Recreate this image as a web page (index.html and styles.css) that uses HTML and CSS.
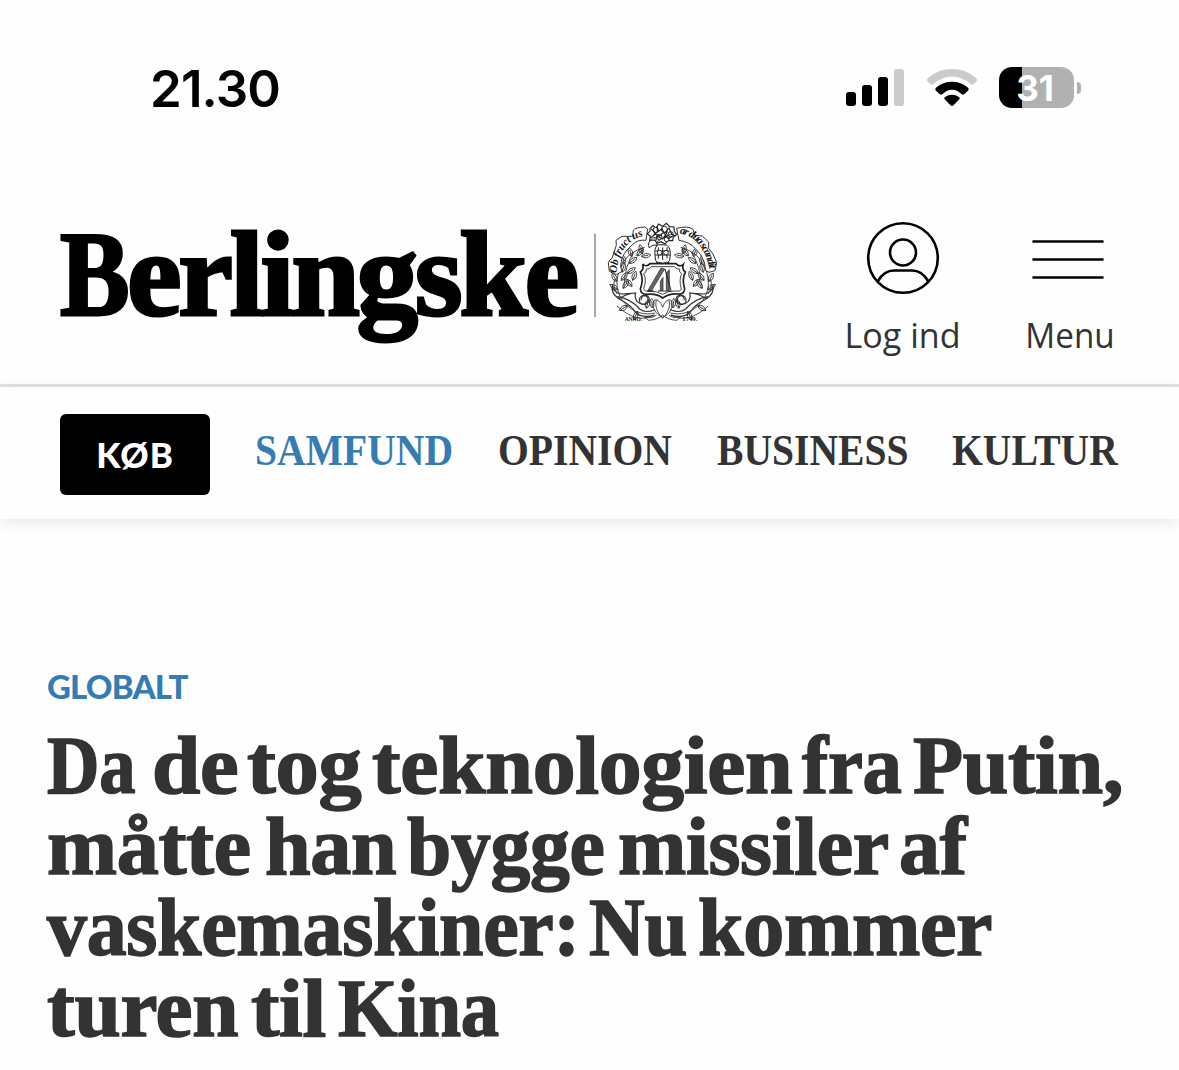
FILE: index.html
```html
<!DOCTYPE html>
<html lang="da">
<head>
<meta charset="utf-8">
<title>Berlingske</title>
<link rel="stylesheet" href="styles.css">
</head>
<body>
<div class="status">
  <span class="clock">21.30</span>
  <div class="indicators">
    <svg class="signal" viewBox="0 0 58 38"><rect y="23" width="10" height="14" rx="3"/><rect x="16" y="16" width="10" height="21" rx="3"/><rect x="32" y="8" width="10" height="29" rx="3"/><rect class="dim" x="48" width="10" height="37" rx="3"/></svg>
    <svg class="wifi" viewBox="0 0 50 38"><path class="dim" d="M.4 12.200Q-.8 10.800.8 9.200Q11 0 25 0T49.200 9.200Q50.800 10.800 49.600 12.200L46.500 15.200Q45 16.500 43.500 15Q35 7.500 25 7.500T6.500 15Q5 16.500 3.500 15.200Z"/><path d="M8.800 21.500Q7.500 20 9 18.700Q16 12.800 25 12.800T41 18.700Q42.500 20 41.200 21.500L37.500 25Q36 26 34.500 25Q30 20.700 25 20.700T15.500 25Q14 26 12.500 25Z"/><path d="M17.700 30.300Q16.500 29 18 28Q25 23.300 32 28Q33.500 29 32.300 30.300L26.500 36.200Q25 37.700 23.500 36.200Z"/></svg>
    <div class="battery"><span class="cell">31</span><span class="cap"></span></div>
  </div>
</div>
<header class="masthead">
  <div class="brand">
    <span class="wordmark"><span class="initial">B</span><span class="rest">erlingske</span></span>
    <svg class="crest" viewBox="0 0 420 360">
      <defs>
        <path id="ribbonL" d="M80 190Q86 90 172 75"/>
        <path id="ribbonR" d="M268 70Q342 82 360 187"/>
        <path id="leaf" d="M0 0Q-13-13 0-29Q13-13 0 0ZM0 0V-21"/>
        <g id="half">
          <path d="M195 309C135 324 72 272 82 205C88 157 118 124 164 112M74 208Q67 231 82 252M192 314Q145 345 81 288M132 126Q104 167 102 228"/>
          <use href="#leaf" transform="translate(80 215) rotate(-28)"/><use href="#leaf" transform="translate(94 211) rotate(38)"/>
          <use href="#leaf" transform="translate(84 239) rotate(-58)"/><use href="#leaf" transform="translate(99 235) rotate(35)"/>
          <use href="#leaf" transform="translate(96 187) rotate(15)"/><use href="#leaf" transform="translate(112 190) rotate(55)"/>
          <use href="#leaf" transform="translate(103 163) rotate(-10)"/><use href="#leaf" transform="translate(118 160) rotate(52)"/>
          <use href="#leaf" transform="translate(126 140) rotate(-20)"/><use href="#leaf" transform="translate(141 138) rotate(38)"/>
          <use href="#leaf" transform="translate(157 132) rotate(-15)"/><use href="#leaf" transform="translate(154 139) rotate(82)"/>
          <use href="#leaf" transform="translate(113 287) rotate(-120)"/><use href="#leaf" transform="translate(143 304) rotate(-155)"/>
          <use href="#leaf" transform="translate(169 295) rotate(15)"/><use href="#leaf" transform="translate(187 294) rotate(-5)"/>
          <use href="#leaf" transform="translate(128 211) rotate(20)"/><use href="#leaf" transform="translate(126 229) rotate(-40)"/>
          <path class="horn" d="M67 225Q62 250 86 266Q114 250 137 249Q132 262 142 275Q159 291 176 276Q182 261 169 256Q154 254 153 271M67 225Q68 247 94 252L137 249M86 266Q123 284 135 306Q154 326 193 316M82 260Q122 266 149 297Q165 311 195 299"/>
          <circle class="horn" cx="161" cy="270" r="13"/>
          <path d="M218 321C197 316 181 285 194 270Q209 266 218 292M218 325C202 309 194 289 199 271M199 316Q181 328 162 320L176 331Q204 329 218 315"/>
        </g>
      </defs>
      <path class="rule" d="M15 71V321"/>
      <use href="#half"/>
      <use href="#half" transform="translate(436 0) scale(-1 1)"/>
      <g class="band">
        <path d="M58 184L55 158Q58 149 66 145L79 106L78 91L96 79L128 79L130 61Q136 52 164 51L173 57L168 91Q144 87 126 105L111 120Q94 139 92 169L96 184L79 194Z"/>
        <path d="M260 55Q294 46 309 58L314 76L337 78L356 96V115L369 132L380 157L375 182L357 187L347 181Q345 154 333 135L316 116Q300 96 267 91Z"/>
      </g>
      <text class="motto"><textPath href="#ribbonL" textLength="148">Ob fruct us</textPath></text>
      <text class="motto"><textPath href="#ribbonR" textLength="150">ar dua scandit</textPath></text>
      <g class="figure">
        <path d="M197 151Q189 110 205 104L229 105Q246 113 239 151L226 165H208ZM178 114Q170 97 188 84Q201 80 213 88Q196 94 202 107Q188 101 178 114ZM196 123H239M195 135H241M205 112V146M218 112V150M231 112V145M199 169Q190 151 218 160Q247 151 237 169"/>
        <circle cx="209" cy="128" r="7"/><circle cx="228" cy="128" r="7"/>
        <g transform="translate(0 6)">
        <path class="plume" d="M180 50l9-9 9 8 8-13 12 7 11-9 10 10 13 1 1 13 7 9-10 8-2 11-14-1-9 11-12-7-12 5-7-10-15 1 2-12-9-8 8-7Z"/>
        <circle cx="197" cy="54" r="8"/><circle cx="223" cy="52" r="9"/><circle cx="242" cy="67" r="8"/><circle cx="208" cy="75" r="8"/><circle cx="230" cy="82" r="7"/>
        <path class="plume" d="M184 51l14 14-17 12M202 42v18l14-10 7 15 14-17 8 19 12 5M197 87l4-14 17 8 8-12 9 11 12-7M191 65l18 7 10-10M232 58l-7 17 17-8"/>
        </g>
      </g>
      <path class="shield" d="M158 162Q169 173 180 161H258Q269 173 280 163Q275 178 286 186Q275 207 284 237Q282 255 263 252Q238 250 218 264Q200 250 172 253Q153 255 151 237Q162 207 151 186Q163 177 158 162Z"/>
      <path class="shield inner" d="M169 177Q177 179 184 170H253Q262 179 269 177Q266 187 275 191Q266 210 274 237Q272 245 257 243Q236 241 218 253Q202 243 178 244Q162 244 161 236Q171 210 161 191Q171 187 169 177Z"/>
      <path class="bars" d="M213 174L224 177L184 243H173ZM211 214l8-12v39h-8ZM229 189l9-10v62h-9Z"/>
      <path class="thin" d="M173 243h19M204 243h20M224 243h20M225 177l18 64"/>
      <text class="year" x="104" y="332" textLength="52" lengthAdjust="spacingAndGlyphs">ANNO.</text>
      <text class="year" x="277" y="332" textLength="45" lengthAdjust="spacingAndGlyphs">1749.</text>
    </svg>
  </div>
  <nav class="tools">
    <a class="tool login"><svg class="icon" viewBox="0 0 72 72"><circle cx="36" cy="36" r="34.800"/><circle cx="36" cy="30.500" r="13"/><path d="M11 59Q17 48.500 27 48.500H45Q55 48.500 61 59"/></svg><span class="label">Log ind</span></a>
    <a class="tool menu"><svg class="icon" viewBox="0 0 72 72"><path d="M1.500 19.500H70.500M1.500 37.500H70.500M1.500 55.500H70.500"/></svg><span class="label">Menu</span></a>
  </nav>
</header>
<nav class="sections">
  <a class="buy">KØB</a>
  <a class="section samfund active"><span>SAMFUND</span></a>
  <a class="section opinion"><span>OPINION</span></a>
  <a class="section business"><span>BUSINESS</span></a>
  <a class="section kultur"><span>KULTUR</span></a>
</nav>
<main class="article">
  <div class="kicker">GLOBALT</div>
  <h1 class="headline">
    <span class="line l1"><span>Da</span> <span>de</span> <span>tog</span> <span>teknologien</span> <span>fra</span> <span>Putin,</span></span>
    <span class="line l2"><span>måtte</span> <span>han</span> <span>bygge</span> <span>missiler</span> <span>af</span></span>
    <span class="line l3"><span>vaskemaskiner:</span> <span>Nu</span> <span>kommer</span></span>
    <span class="line l4"><span>turen</span> <span>til</span> <span>Kina</span></span>
  </h1>
</main>
</body>
</html>
```
FILE: styles.css
```css
* { box-sizing: border-box; }
body { margin: 0; width: 1179px; height: 1070px; overflow: hidden; background: #fefefe; color: #333; font-family: "Open Sans", sans-serif; }
svg { display: block; overflow: visible; }
.status { height: 210px; padding: 60px 98px 0 150px; display: flex; justify-content: space-between; align-items: flex-start; color: #000; }
.clock { font: 600 51px/57px Inter, sans-serif; letter-spacing: -.9px; }
.indicators { display: flex; align-items: flex-start; padding-top: 7px; }
.signal { width: 58px; height: 38px; margin: 2px 23px 0 0; }
.wifi { width: 50px; height: 38px; margin: 2px 22px 0 0; }
.dim { fill: #cbcbcb; }
.battery { display: flex; align-items: center; gap: 3px; }
.cell { width: 75px; height: 41px; padding-right: 3px; border-radius: 13px; background: linear-gradient(90deg, #000 23px, #b1b1b1 23px); color: #fff; font: 700 35px/42px Inter, sans-serif; text-align: center; }
.cap { width: 4px; height: 12px; border-radius: 0 4px 4px 0; background: #b1b1b1; }
.masthead { height: 177px; display: flex; justify-content: space-between; padding: 0 64px 0 60px; border-bottom: 3px solid #e2e2e2; }
.brand { display: flex; color: #000; }
.wordmark { width: 530px; height: 130px; display: flex; font: bold 120px/130px "Liberation Serif", serif; letter-spacing: -3.200px; white-space: nowrap; -webkit-text-stroke: 3px #000; }
.wordmark span { transform-origin: 0 0; }
.initial { width: 67px; transform: scaleX(.87); }
.rest { transform: scaleX(1.025); }
.crest { width: 140px; height: 120px; fill: none; stroke: #333; stroke-width: 2.600; }
.crest .rule { stroke: #555; stroke-width: 3; }
.crest .horn { stroke-width: 3.500; }
.crest .band path { fill: #fefefe; stroke: #333; stroke-width: 3; }
.crest .figure path, .crest .figure circle { stroke: #222; fill: #fefefe; stroke-width: 3; }
.crest .figure .plume { fill: none; stroke: #222; stroke-width: 3.500; }
.crest .shield { fill: #fefefe; stroke: #222; stroke-width: 5; }
.crest .inner { stroke-width: 2.500; }
.crest .bars { fill: #666; stroke: #222; stroke-width: 2; }
.crest .thin { stroke: #222; stroke-width: 3; }
.crest .motto { font: italic bold 33px "Liberation Serif", serif; fill: #111; stroke: none; }
.crest .year { font: bold 18px "Liberation Serif", serif; fill: #111; stroke: none; }
.tools { display: flex; gap: 65px; padding-top: 12px; }
.tool { display: flex; flex-direction: column; align-items: center; }
.login { width: 116px; }
.menu { width: 89px; }
.menu .icon { margin-right: 5px; }
.icon { width: 72px; height: 72px; fill: none; stroke: #000; stroke-width: 2.600; stroke-linecap: round; }
.label { margin-top: 17px; font-size: 35px; line-height: 48px; white-space: nowrap; transform: scaleX(.95); }
.login .label { transform: scaleX(.975); }
.sections { height: 132px; padding: 27px 0 0 60px; display: flex; background: #fefefe; box-shadow: 0 3px 15px rgba(0,0,0,.09); }
.buy { width: 150px; height: 81px; border-radius: 6px; background: #000; color: #fff; text-align: center; font: 900 35px/81px Lato, sans-serif; letter-spacing: 1px; }
.section { font: bold 45px/52px "Liberation Serif", serif; padding-top: 10px; white-space: nowrap; }
.section span { display: inline-block; transform-origin: 0 0; transform: scaleX(.88); }
.samfund { width: 199px; margin-left: 45px; }
.opinion { width: 174px; margin-left: 44px; }
.business { width: 190px; margin-left: 45px; }
.kultur { width: 166px; margin-left: 45px; }
.active, .kicker { color: #367cb2; }
.article { padding: 146px 0 0 47px; }
.kicker { height: 60px; font: 900 33px/43px Lato, sans-serif; letter-spacing: -.8px; }
.headline { margin: 0; font: bold 82px/81px "Liberation Serif", serif; -webkit-text-stroke: 1.600px #333; }
.line { display: grid; justify-content: start; white-space: nowrap; letter-spacing: -.3px; }
.line > span { width: max-content; transform-origin: 0 0; }
/* Column widths set the tight word rhythm of each headline line */
.l1 { grid-template-columns: 105px 95px 125px 430px 111px 206px; }
.l2 { grid-template-columns: 218px 142px 211px 281px 68px; }
.l3 { grid-template-columns: 542px 109px 294px; }
.l4 { grid-template-columns: 204px 87px 160px; }
.l1 > :nth-child(1) { transform: scaleX(.885); }
.l1 > :nth-child(2) { transform: scaleX(1.060); }
.l1 > :nth-child(3) { transform: scaleX(1.055); }
.l1 > :nth-child(4) { transform: scaleX(1.045); }
.l1 > :nth-child(5) { transform: scaleX(.960); }
.l2 > :nth-child(1) { transform: scaleX(1.025); }
.l2 > :nth-child(3) { transform: scaleX(.970); }
.l3 > :nth-child(1) { transform: scaleX(.974); }
.l3 > :nth-child(2) { transform: scaleX(.940); }
.l4 > :nth-child(1) { transform: scaleX(1.015); }
.l4 > :nth-child(2) { transform: scaleX(1.040); }
.l4 > :nth-child(3) { transform: scaleX(.935); }
```
